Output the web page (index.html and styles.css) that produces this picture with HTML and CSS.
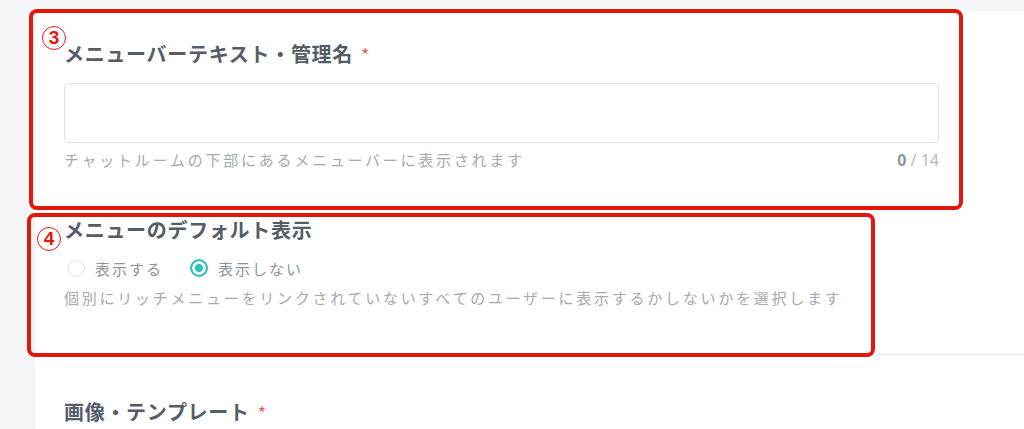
FILE: index.html
```html
<!DOCTYPE html>
<html lang="ja">
<head>
    <meta charset="utf-8">
    <title>メニュー設定</title>
    <link rel="stylesheet" href="styles.css">
</head>
<body>
<div class="page">
    <div class="card">
        <div class="field field-name">
            <h3 class="label">メニューバーテキスト・管理名<span class="req">*</span></h3>
            <div class="input"></div>
            <div class="hint-row">
                <span class="hint">チャットルームの下部にあるメニューバーに表示されます</span>
                <span class="count"><b>0</b> / 14</span>
            </div>
        </div>
        <div class="field field-default">
            <h3 class="label">メニューのデフォルト表示</h3>
            <div class="radios">
                <label class="radio"><span class="dot"></span>表示する</label>
                <label class="radio on"><span class="dot"></span>表示しない</label>
            </div>
            <p class="hint">個別にリッチメニューをリンクされていないすべてのユーザーに表示するかしないかを選択します</p>
        </div>
        <div class="field field-image">
            <h3 class="label">画像・テンプレート<span class="req">*</span></h3>
        </div>
    </div>
</div>

<!-- 注釈の赤枠 -->
<div class="mark markA"><span class="num">3</span></div>
<div class="mark markB"><span class="num">4</span></div>
</body>
</html>
```

FILE: styles.css
```css
*{ margin:0; padding:0; box-sizing:border-box }
body{
    background:#f5f6f8;
    font-family:"Noto Sans CJK JP", "Noto Sans", sans-serif;
    overflow:hidden;
}
.page{ padding:11px 0 0 35px; height:429px }
.card{
    background:#fff;
    height:100%;
    box-shadow:-1px 0 3px rgba(0,0,0,0.04);
}
.field{ padding:0 85px 0 29px }
.label{
    font-size:20px; line-height:28px;
    font-weight:700; color:#535d68;
    letter-spacing:0.7px;
}
.req{
    color:#f05a64; font-size:18px; font-weight:400;
    margin-left:8px;
}
.field-name{ padding-top:29px }
.input{
    margin-top:15px;
    height:60px;
    border:1px solid #dde1e6; border-radius:4px;
}
.hint-row{
    display:flex; justify-content:space-between; align-items:center;
    margin-top:7px; height:20px;
}
.hint{
    font-size:15px; line-height:20px;
    color:#a3aab1; letter-spacing:2.75px;
}
.count{
    font-family:"Noto Sans", sans-serif;
    font-size:16px; color:#b3bac2;
}
.count b{ color:#8c96a1 }

.field-default{
    padding-top:46px; padding-bottom:46px;
    border-bottom:1px solid #e8e9eb;
}
.radios{ display:flex; gap:23px; margin-top:14px; height:20px; align-items:center }
.radio{
    display:flex; align-items:center; gap:10px;
    font-size:15px; color:#8d949b; letter-spacing:2px;
    padding-left:4px;
}
.radio .dot{
    width:17px; height:17px; border-radius:50%;
    border:1px solid #dcdfe4; background:#fff;
}
.on .dot{
    width:18px; height:18px;
    border:2px solid #2bc3b4;
    background:#2bc3b4;
    box-shadow:inset 0 0 0 3px #fff;
}
.field-default .hint{ display:block; margin-top:10px }

.field-image{ padding-top:43px }

.mark{
    position:absolute;
    border:4px solid #e3170a; border-radius:8px;
}
.markA{ left:29px; top:9px; width:934px; height:201px }
.markB{ left:27px; top:213px; width:848px; height:144px }
.num{
    position:absolute;
    width:24px; height:24px; border-radius:50%;
    border:1.5px solid #e3170a; color:#e3170a;
    font-family:"Liberation Sans", sans-serif;
    font-size:19px; font-weight:700; line-height:21px;
    text-align:center;
}
.markA .num{ left:9px; top:13px }
.markB .num{ left:6px; top:10px }
```
